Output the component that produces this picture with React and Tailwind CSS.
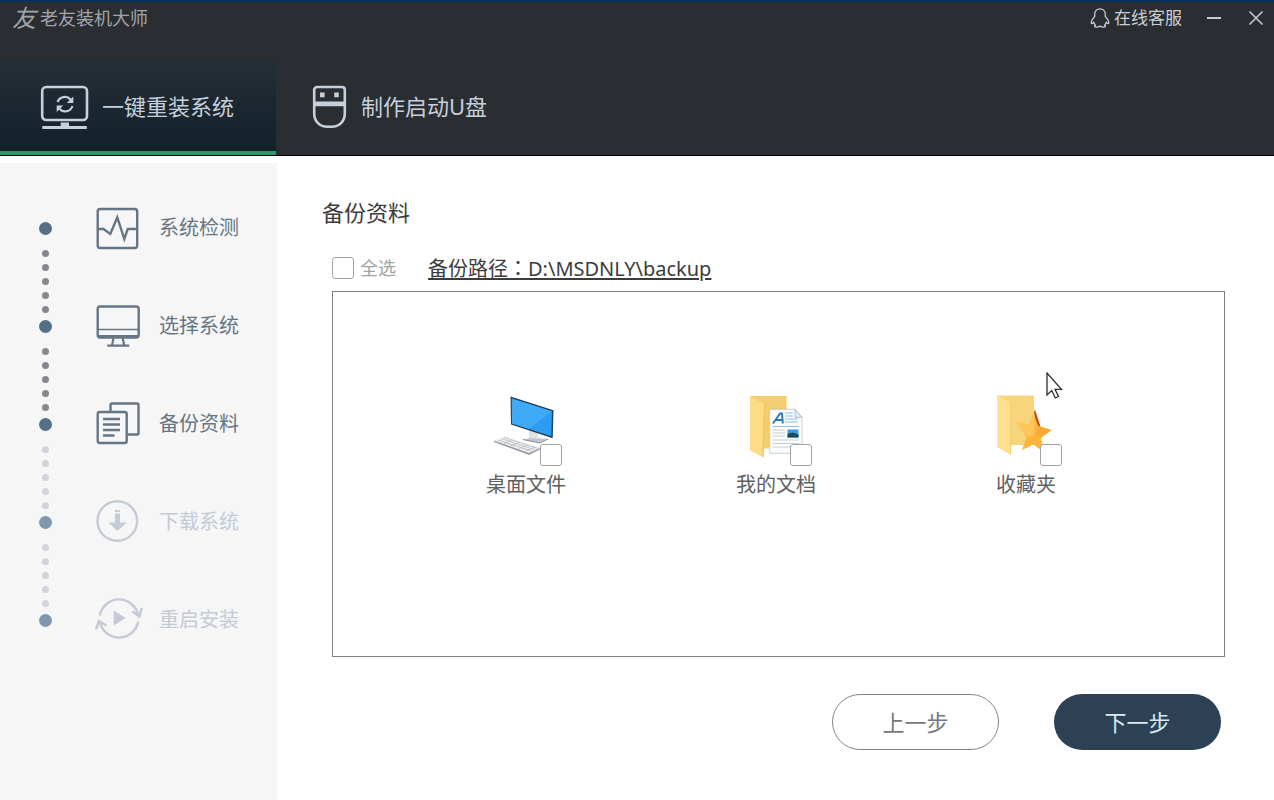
import React, { useState } from 'react';
import clsx from 'clsx';

const ReinstallIcon = () => (
  <svg className="h-[46px] w-[50px] shrink-0" viewBox="0 0 50 46" fill="none" stroke="currentColor" aria-hidden="true">
    <rect x="2.2" y="3" width="44.800" height="33" rx="4" strokeWidth="2.600" />
    <path d="M20.700 38.500h8.300v4h-8.300z" fill="currentColor" stroke="none" />
    <path d="M2.300 43.500h44.500" strokeWidth="2.800" />
    <path d="M17.500 18a7.800 7.800 0 0 1 13.200-2.300M32.500 22a7.800 7.800 0 0 1-13.200 2.800" strokeWidth="2.200" />
    <path d="M33.300 12.500v6.500h-6.500zM16.700 28v-6.500h6.500z" fill="currentColor" stroke="none" />
  </svg>
);

const UsbIcon = () => (
  <svg className="h-[44px] w-[35px] shrink-0" viewBox="0 0 35 44" fill="none" stroke="currentColor" aria-hidden="true">
    <path d="M5 2h25a2.800 2.800 0 0 1 2.800 2.800v23.700c0 8-5.600 13.300-13.300 13.300h-4c-7.700 0-13.300-5.300-13.300-13.300V4.800A2.800 2.800 0 0 1 5 2z" strokeWidth="2.600" />
    <path d="M2 16.500h31v4.800H2zM8 7.600h4.600v4.600H8zM22.200 7.600h4.600v4.600h-4.600z" fill="currentColor" stroke="none" />
  </svg>
);

const PenguinIcon = () => (
  <svg className="h-5 w-5 shrink-0" viewBox="0 0 20 20" fill="none" stroke="currentColor" strokeWidth="1.300" strokeLinejoin="round" aria-hidden="true">
    <path d="M10 .8C6.800.8 4.700 3 4.700 6.400v2.100C3.200 10.300 1.200 12.500 1.200 14.500c0 1.500 1.300 1.400 2.500-.3.400 1.200 1 2.100 1.800 2.900-1.600.6-1.200 2 .9 2 1.500 0 2.700-.4 3.600-1 .9.600 2.100 1 3.600 1 2.100 0 2.500-1.400.9-2 .8-.8 1.400-1.700 1.800-2.900 1.200 1.700 2.500 1.800 2.500.3 0-2-2-4.200-3.500-6V6.400C15.300 3 13.200.8 10 .8z" />
  </svg>
);

const StepIcon = ({ children }) => (
  <svg className="h-[44px] w-[48px] shrink-0 overflow-visible" viewBox="0 0 48 44" fill="none" stroke="currentColor" strokeWidth="2.400" aria-hidden="true">
    {children}
  </svg>
);

const DetectIcon = () => (
  <StepIcon>
    <rect x="2.700" y="3" width="39.500" height="39" rx="2.500" />
    <path d="M3 23h5.500l6.800 5 7-16.500 7 21.500 3.400-10H42" />
  </StepIcon>
);

const MonitorIcon = () => (
  <StepIcon>
    <rect x="2.700" y="2.500" width="41" height="31" rx="2.500" />
    <path d="M3 25.500h40" strokeWidth="1.300" />
    <path d="M3 32.500h40" strokeWidth="3" />
    <path d="M18.500 34l-1.500 7.500M27.700 34l1.500 7.500M12.300 41.700h21.900" strokeWidth="2.200" />
  </StepIcon>
);

const BackupIcon = () => (
  <StepIcon>
    <path d="M15.500 9V3a1.500 1.500 0 0 1 1.500-1.500h25A1.500 1.500 0 0 1 43.500 3v28A1.500 1.500 0 0 1 42 32.500H32" />
    <rect x="2.700" y="10" width="29" height="31" rx="2" />
    <path d="M8 17h17M8 22.500h17M8 28h17M8 33.500h11.500" />
  </StepIcon>
);

const DownloadIcon = () => (
  <StepIcon>
    <circle cx="22.300" cy="21" r="19.800" />
    <path d="M20 10h5v2h-5zM20 13.500h5v9h6.700l-9.200 8.500-9.200-8.500H20z" fill="currentColor" stroke="none" />
  </StepIcon>
);

const RestartIcon = () => (
  <StepIcon>
    <path d="M4.800 17.500a19.500 19.500 0 0 1 38.400 0M43.200 23.500a19.500 19.500 0 0 1-38.400 0" />
    <path d="M37.500 13.500l6.800 5 2.500-8.500M1 31.300l3-8.300 7.500 4.500" />
    <path d="M18.700 12.500l12 7.500-12 7.500z" fill="currentColor" stroke="none" />
  </StepIcon>
);

const DesktopPicture = () => (
  <svg className="h-[72px] w-[72px]" viewBox="0 0 72 72" aria-hidden="true">
    <path d="M34 46l6-2.500 18 1.500-8 3.500z" fill="#c3c8cc" />
    <path d="M39 35l9 3v7l-9-2z" fill="#dfe3e6" />
    <path d="M33 45.500l17 3.500 8-4" fill="none" stroke="#858b90" />
    <path d="M20.500 2.500l43 13.800-.8 28L21 30.500z" fill="#24415c" />
    <path d="M21.800 4.500L62 17.300l-.7 24.900L22 29.500z" fill="#2b9cf2" />
    <path d="M21.800 4.500L62 17.300 39 35l-17-5.500z" fill="#4db4fa" opacity=".6" />
    <path d="M4 46.500l11-4 36 11-12 6.500z" fill="#eceeef" />
    <path d="M4 46.500l35 12.500 12-5.500v1.500l-12 6L4 48z" fill="#9b9fa3" />
    <path d="M8 46l33 11M11 44.500l33 11M14 43.300l33 11M14 49.500l7-3M21 52l8-3.500M29 54.500l8-3.500M36 57l9-4" fill="none" stroke="#b9bdc1" strokeWidth=".8" />
  </svg>
);

const DocumentsPicture = () => (
  <svg className="h-[72px] w-[72px]" viewBox="0 0 72 72" aria-hidden="true">
    <path d="M10 2h36.500v12l2 2v38.500H23z" fill="#f3cd70" />
    <path d="M29.700 15.300H55l7 8v36H29.700z" fill="#fcfdfe" stroke="#b9c5d0" strokeWidth=".8" />
    <path d="M55 15.300v8h7z" fill="#e4e9ee" stroke="#a5b0ba" strokeWidth=".8" />
    <path d="M33 29.500l7-10h2l.8 10M36 26h6" fill="none" stroke="#2c7cbb" strokeWidth="2" />
    <path d="M45 19h8M45 22h8M45 25h13M45 28h13M33 32.500h26" stroke="#8cc1e8" strokeWidth="1" />
    <path d="M33 36h12M33 39h12M33 42h12M33 46h26M33 49.500h26M33 53h20" stroke="#c5cdd5" strokeWidth="1" />
    <path d="M47.500 35.500h11v8h-11z" fill="#3f9be0" />
    <path d="M47.500 40l5-1.500 6 2v3h-11z" fill="#1d4a55" />
    <path d="M10 2l15 8.500-1.500 53L10 56.500z" fill="#fddc85" />
    <path d="M24.500 11L23 63.500" stroke="#e3b653" strokeWidth=".8" />
  </svg>
);

const FavoritesPicture = () => (
  <svg className="h-[72px] w-[72px]" viewBox="0 0 72 72" aria-hidden="true">
    <path d="M7 1.500h37v13l1.500 2V51H20z" fill="#f8d57c" />
    <path d="M7 1.500L21 9v52L7 53z" fill="#fee08f" />
    <path d="M20.800 9v51" stroke="#ebc160" strokeWidth=".8" />
    <path d="M44 17.500l1.500-.5 5 15.500-4 1z" fill="#c44b1c" />
    <path d="M43.500 19.500l4.800 12.500 13.200 4-10.300 7.500 1.800 14-9.500-7-11.500 5.500 4.500-12.500-9.500-15 12 2z" fill="#fdb53a" />
    <path d="M27 28.500l12 2 4.500-11 1.500 21-8.500 2.500z" fill="#fdc65a" />
    <path d="M48.300 32l13.200 4-10.300 7.500-6.200-3z" fill="#f8a834" />
  </svg>
);

const steps = [
  { title: '系统检测', Icon: DetectIcon, reached: true },
  { title: '选择系统', Icon: MonitorIcon, reached: true },
  { title: '备份资料', Icon: BackupIcon, reached: true },
  { title: '下载系统', Icon: DownloadIcon, reached: false },
  { title: '重启安装', Icon: RestartIcon, reached: false },
];

const folders = [
  { id: 'desktop', label: '桌面文件', Picture: DesktopPicture },
  { id: 'documents', label: '我的文档', Picture: DocumentsPicture },
  { id: 'favorites', label: '收藏夹', Picture: FavoritesPicture },
];

const checkboxStyle =
  'size-[22px] shrink-0 appearance-none rounded-[3px] border border-[#a3a3a3] bg-white checked:bg-[#2c4254]';

const Header = () => (
  <header className="border-t-2 border-b border-t-[#07305a] border-b-black bg-[#2a2e33]">
    <div className="flex h-[58px] items-start justify-between pt-1">
      <div className="flex h-6 items-center gap-1 pl-3 text-[#a2a5a8]">
        <span className="text-2xl leading-6 italic">友</span>
        <h1 className="text-lg leading-6">老友装机大师</h1>
      </div>
      <div className="flex h-6 items-center pr-[10px] text-[#c9cdd2]">
        <button className="flex items-center gap-1 text-[17px] leading-6">
          <PenguinIcon />
          在线客服
        </button>
        <button className="ml-6 flex size-4 items-center justify-center" aria-label="最小化">
          <span className="h-[2px] w-[14px] bg-current" />
        </button>
        <button className="ml-[26px] flex size-4 items-center justify-center" aria-label="关闭">
          <svg className="size-4" viewBox="0 0 16 16" stroke="currentColor" strokeWidth="1.500" aria-hidden="true">
            <path d="M1.500 1.500l13 13M14.500 1.500l-13 13" />
          </svg>
        </button>
      </div>
    </div>
    <nav className="flex h-[95px] text-[22px] text-[#c6cfdb]">
      <button className="flex w-[276px] items-center gap-3 border-b-4 border-[#279b6c] bg-linear-to-b from-[#242f37] to-[#14202a] pt-0.5 pl-10">
        <ReinstallIcon />
        一键重装系统
      </button>
      <button className="flex items-center gap-[14px] px-9 pb-0.5">
        <UsbIcon />
        制作启动U盘
      </button>
    </nav>
  </header>
);

const Timeline = () => (
  <div className="flex w-[13px] flex-col items-center pt-4" aria-hidden="true">
    {steps.map((step, index) => (
      <React.Fragment key={step.title}>
        <span className={clsx('size-[13px] rounded-full', step.reached ? 'bg-[#557086]' : 'bg-[#7d98b0]')} />
        {index < steps.length - 1 && (
          <div className={clsx('flex flex-col gap-[7px] pt-[15px] pb-[7px]', index < 2 ? 'text-[#84898f]' : 'text-[#d0d5dd]')}>
            {[1, 2, 3, 4, 5].map((dot) => (
              <span key={dot} className="size-[7px] rounded-full bg-current" />
            ))}
          </div>
        )}
      </React.Fragment>
    ))}
  </div>
);

const Sidebar = () => (
  <aside className="mt-[7px] flex w-[277px] shrink-0 items-start bg-[#f6f6f6] pt-[43px] pl-[39px]">
    <Timeline />
    <ol className="ml-[43px] flex flex-col gap-[54px]">
      {steps.map(({ title, Icon, reached }) => (
        <li key={title} className={clsx('flex items-center gap-4 text-xl leading-[44px]', reached ? 'text-[#667583]' : 'text-[#c3cbd6]')}>
          <Icon />
          {title}
        </li>
      ))}
    </ol>
  </aside>
);

const App = () => {
  const [selected, setSelected] = useState([]);

  const toggle = (id) => {
    setSelected(selected.includes(id) ? selected.filter((item) => item !== id) : [...selected, id]);
  };

  const toggleAll = () => {
    setSelected(selected.length === folders.length ? [] : folders.map((folder) => folder.id));
  };

  return (
    <div className="flex min-h-screen flex-col bg-white font-['Noto_Sans','Noto_Sans_CJK_SC',sans-serif]">
      <Header />
      <div className="flex flex-1">
        <Sidebar />
        <main className="flex flex-1 flex-col pt-10 pr-[49px] pb-[50px] pl-[55px]">
          <h2 className="-ml-[10px] text-[22px] leading-8 text-[#3c3c3c]">备份资料</h2>
          <div className="mt-6 flex h-8 items-center">
            <label className="flex items-center gap-1.5 text-lg text-[#a3a3a3]">
              <input type="checkbox" className={checkboxStyle} checked={selected.length === folders.length} onChange={toggleAll} />
              全选
            </label>
            <a href="#backup" className="ml-8 text-xl text-[#3c3c3c] underline underline-offset-2">
              备份路径<span className="font-['Noto_Sans_CJK_TC',sans-serif]">：</span>D:\MSDNLY\backup
            </a>
          </div>

          <section className="relative mt-[7px] grid flex-1 grid-cols-3 items-start border border-[#808080] pt-[102px] pr-[73px] pb-[102px] pl-[68px]">
            {folders.map(({ id, label, Picture }) => (
              <label key={id} className="flex flex-col items-center gap-[5px] text-xl leading-7 text-[#606060]">
                <span className="relative">
                  <Picture />
                  <input type="checkbox" className={clsx(checkboxStyle, 'absolute right-0 bottom-0')} checked={selected.includes(id)} onChange={() => toggle(id)} />
                </span>
                {label}
              </label>
            ))}
            {/* puntero del ratón */}
            <svg className="absolute top-20 left-[80%] h-[28px] w-[17px]" viewBox="0 0 17 28" fill="#fff" stroke="#2b2b33" strokeWidth="1.300" aria-hidden="true">
              <path d="M1 1v22l4.700-4.500 3.600 7.500 3.200-1.500-3.500-7.200h6.500z" />
            </svg>
          </section>

          <div className="mt-[37px] flex justify-end gap-[55px] pr-1 text-[22px]">
            <button className="h-14 w-[167px] rounded-full border border-[#808488] bg-white text-[#74797e]">上一步</button>
            <button className="h-14 w-[167px] rounded-full bg-[#2c4254] text-[#d9e8f2]">下一步</button>
          </div>
        </main>
      </div>
    </div>
  );
};

export default App;
